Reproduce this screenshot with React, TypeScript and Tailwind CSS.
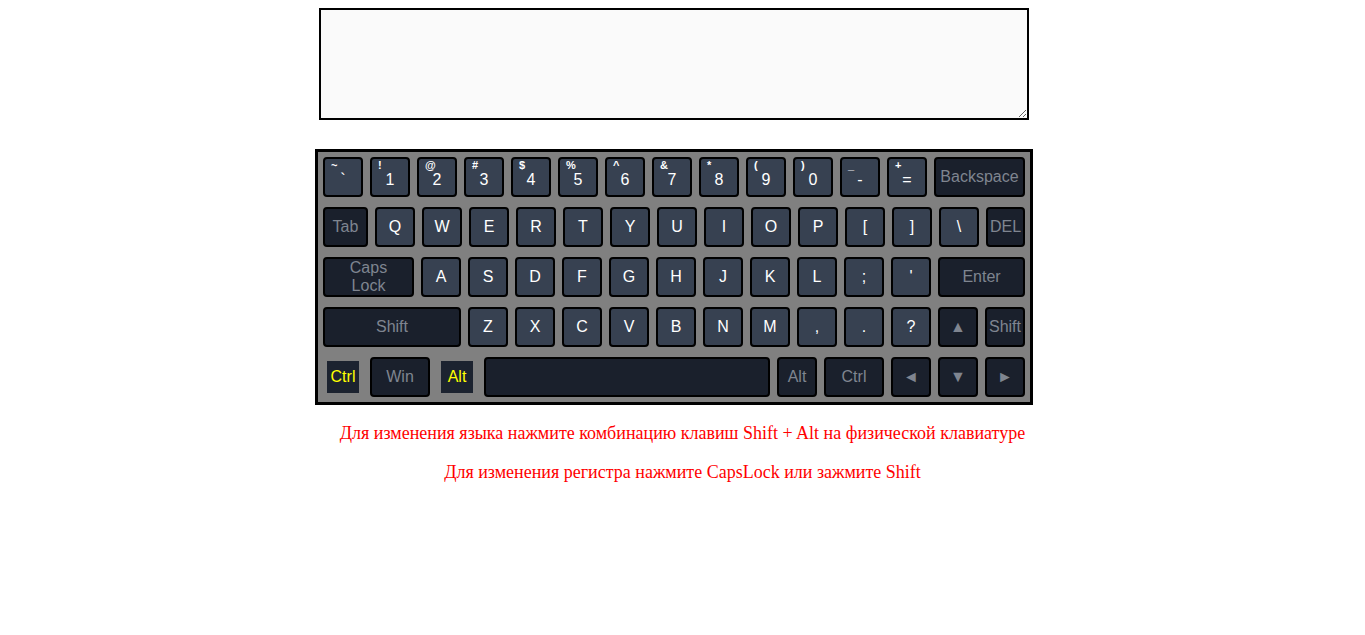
type K = { label: string; top?: string; w?: number; dark?: boolean; active?: boolean; small?: boolean };

const rows: K[][] = [
  [
    { label: "`", top: "~" },
    { label: "1", top: "!" },
    { label: "2", top: "@" },
    { label: "3", top: "#" },
    { label: "4", top: "$" },
    { label: "5", top: "%" },
    { label: "6", top: "^" },
    { label: "7", top: "&" },
    { label: "8", top: "*" },
    { label: "9", top: "(" },
    { label: "0", top: ")" },
    { label: "-", top: "_" },
    { label: "=", top: "+" },
    { label: "Backspace", w: 91, dark: true },
  ],
  [
    { label: "Tab", w: 45, dark: true },
    ..."QWERTYUIOP[]\\".split("").map((c) => ({ label: c })),
    { label: "DEL", w: 39, dark: true },
  ],
  [
    { label: "Caps Lock", w: 91, dark: true, small: true },
    ..."ASDFGHJKL;'".split("").map((c) => ({ label: c })),
    { label: "Enter", w: 87, dark: true },
  ],
  [
    { label: "Shift", w: 138, dark: true },
    ..."ZXCVBNM,.?".split("").map((c) => ({ label: c })),
    { label: "▲", dark: true },
    { label: "Shift", dark: true },
  ],
  [
    { label: "Ctrl", active: true },
    { label: "Win", w: 60, dark: true },
    { label: "Alt", active: true },
    { label: "", w: 286, dark: true },
    { label: "Alt", dark: true },
    { label: "Ctrl", w: 60, dark: true },
    { label: "◄", dark: true },
    { label: "▼", dark: true },
    { label: "►", dark: true },
  ],
];

function Key({ k }: { k: K }) {
  const width = k.w ?? 40;
  if (k.active) {
    return (
      <div className="flex h-[40px] items-center justify-center" style={{ width }}>
        <div className="flex h-[32px] w-[32px] items-center justify-center bg-[#1c2330] text-[16px] text-[#ffff00]">
          {k.label}
        </div>
      </div>
    );
  }
  if (k.top) {
    return (
      <div
        className="flex h-[40px] flex-col rounded-[4px] border-2 border-black bg-[#374151] text-white"
        style={{ width }}
      >
        <span className="self-start pl-[6px] pt-[1px] text-[11px] font-bold leading-[10px]">{k.top}</span>
        <span className="text-center text-[16px] leading-[20px]">{k.label}</span>
      </div>
    );
  }
  return (
    <div
      className={
        "flex h-[40px] items-center justify-center rounded-[4px] border-2 border-black text-center " +
        (k.dark ? "bg-[#1a202c] text-[#7f8590] " : "bg-[#374151] text-white ") +
        (k.small ? "px-5 text-[16px] leading-[18px]" : "text-[16px]")
      }
      style={{ width }}
    >
      {k.label}
    </div>
  );
}

export default function App() {
  return (
    <div className="min-h-screen bg-white font-['Liberation_Sans',Arial,sans-serif]">
      <div className="ml-[315px] flex w-[718px] flex-col items-center pt-[8px]">
        <textarea className="h-[112px] w-[710px] border-2 border-black bg-[#fafafa] outline-none" />
        <div className="mt-[29px] flex w-[718px] flex-col gap-[10px] border-[3px] border-black bg-[#808080] p-[5px]">
          {rows.map((row, i) => (
            <div key={i} className="flex gap-[7px]">
              {row.map((k, j) => (
                <Key key={j} k={k} />
              ))}
            </div>
          ))}
        </div>
      </div>
      <div className="mt-[18px] flex flex-col items-center gap-[18px] font-['Liberation_Serif','Times_New_Roman',serif] text-[18px] leading-[21px] text-[#ff0000]">
        <p>Для изменения языка нажмите комбинацию клавиш Shift + Alt на физической клавиатуре</p>
        <p>Для изменения регистра нажмите CapsLock или зажмите Shift</p>
      </div>
    </div>
  );
}
